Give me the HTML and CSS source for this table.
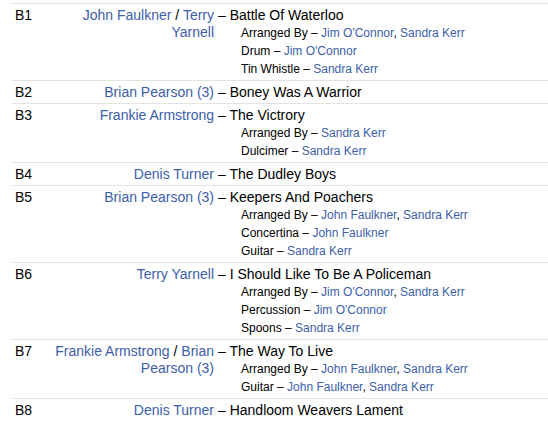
FILE: index.html
```html
<!DOCTYPE html>
<html>
<head>
<meta charset="utf-8">
<link rel="stylesheet" href="styles.css">
</head>
<body>
<div class="tracklist">
  <div class="track">
    <div class="pos">B1</div>
    <div class="artists"><a>John Faulkner</a> / <a>Terry Yarnell</a></div>
    <div class="title">
      <div class="name">– Battle Of Waterloo</div>
      <div class="credits">
        <div class="credit">Arranged By – <a>Jim O'Connor</a>, <a>Sandra Kerr</a></div>
        <div class="credit">Drum – <a>Jim O'Connor</a></div>
        <div class="credit">Tin Whistle – <a>Sandra Kerr</a></div>
      </div>
    </div>
  </div>
  <div class="track">
    <div class="pos">B2</div>
    <div class="artists"><a>Brian Pearson (3)</a></div>
    <div class="title"><div class="name">– Boney Was A Warrior</div></div>
  </div>
  <div class="track">
    <div class="pos">B3</div>
    <div class="artists"><a>Frankie Armstrong</a></div>
    <div class="title">
      <div class="name">– The Victrory</div>
      <div class="credits">
        <div class="credit">Arranged By – <a>Sandra Kerr</a></div>
        <div class="credit">Dulcimer – <a>Sandra Kerr</a></div>
      </div>
    </div>
  </div>
  <div class="track">
    <div class="pos">B4</div>
    <div class="artists"><a>Denis Turner</a></div>
    <div class="title"><div class="name">– The Dudley Boys</div></div>
  </div>
  <div class="track">
    <div class="pos">B5</div>
    <div class="artists"><a>Brian Pearson (3)</a></div>
    <div class="title">
      <div class="name">– Keepers And Poachers</div>
      <div class="credits">
        <div class="credit">Arranged By – <a>John Faulkner</a>, <a>Sandra Kerr</a></div>
        <div class="credit">Concertina – <a>John Faulkner</a></div>
        <div class="credit">Guitar – <a>Sandra Kerr</a></div>
      </div>
    </div>
  </div>
  <div class="track">
    <div class="pos">B6</div>
    <div class="artists"><a>Terry Yarnell</a></div>
    <div class="title">
      <div class="name">– I Should Like To Be A Policeman</div>
      <div class="credits">
        <div class="credit">Arranged By – <a>Jim O'Connor</a>, <a>Sandra Kerr</a></div>
        <div class="credit">Percussion – <a>Jim O'Connor</a></div>
        <div class="credit">Spoons – <a>Sandra Kerr</a></div>
      </div>
    </div>
  </div>
  <div class="track">
    <div class="pos">B7</div>
    <div class="artists"><a>Frankie Armstrong</a> / <a>Brian Pearson (3)</a></div>
    <div class="title">
      <div class="name">– The Way To Live</div>
      <div class="credits">
        <div class="credit">Arranged By – <a>John Faulkner</a>, <a>Sandra Kerr</a></div>
        <div class="credit">Guitar – <a>John Faulkner</a>, <a>Sandra Kerr</a></div>
      </div>
    </div>
  </div>
  <div class="track">
    <div class="pos">B8</div>
    <div class="artists"><a>Denis Turner</a></div>
    <div class="title"><div class="name">– Handloom Weavers Lament</div></div>
  </div>
</div>
</body>
</html>
```

FILE: styles.css
```css
html, body {
  margin: 0;
  padding: 0;
  background: #fff;
}
body {
  font-family: "Liberation Sans", Arial, sans-serif;
  color: #000;
  font-size: 14px;
}
.tracklist {
  margin-left: 12px;
  padding-top: 3px;
}
.track {
  display: grid;
  grid-template-columns: 38px 164px 1fr;
  border-top: 1px solid #e4e4e4;
  padding: 3px 0 2px;
  line-height: 17px;
}
.pos {
  padding-left: 3px;
}
.artists {
  text-align: right;
}
.title {
  padding-left: 4px;
}
a {
  color: #3c5ea8;
  text-decoration: none;
}
.credits {
  padding-left: 23px;
  font-size: 12px;
  line-height: 18px;
}
```
